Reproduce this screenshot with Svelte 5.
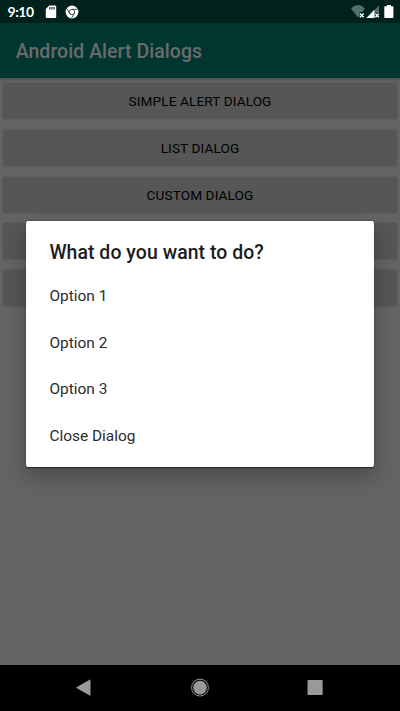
<script>
  const buttons = ['Simple Alert Dialog', 'List Dialog', 'Custom Dialog', '', ''];
  const options = ['Option 1', 'Option 2', 'Option 3', 'Close Dialog'];
</script>

<div class="screen">
  <header class="status">
    <span class="time">9:10</span>
    <svg class="sd" width="12" height="14" viewBox="0 0 12 14">
      <path d="M4.2.5H10Q11.2.5 11.2 1.7V12Q11.2 13 10 13H2Q.8 13 .8 12V4Z" fill="#fff" />
      <path d="M4.8 2v2.4M6.9 2v2.4M9 2v2.4" stroke="#00211c" stroke-width="1.1" />
    </svg>
    <svg class="chrome" width="14" height="14" viewBox="0 0 14 14">
      <circle cx="7" cy="7" r="6.4" fill="#fff" />
      <g fill="none" stroke="#18332f" stroke-width=".8">
        <circle cx="7" cy="7" r="2.7" />
        <path d="M7 4.3H12.4M4.7 8.4 2 3.7M9.3 8.4 6.6 13" />
      </g>
    </svg>
    <svg class="signals" width="48" height="16" viewBox="0 0 48 16">
      <path d="M0 3.4Q7-3.2 14 3.4L11.5 7H8.6V11L7 12.4Z" fill="#50706b" />
      <path d="M9 8.6 12.6 12.2M12.6 8.6 9 12.2" stroke="#fff" stroke-width="1.4" />
      <path d="M28 .6V8H24V13H15.8Z" fill="#50706b" />
      <path d="M23.4 4.8V13H15.4Z" fill="#fff" />
      <path d="M24.4 8.8 27.8 12.2M27.8 8.8 24.4 12.2" stroke="#fff" stroke-width="1.4" />
      <path d="M33.9 1.3H36V0H40V1.3H41.5Q42.4 1.3 42.4 2.1V12.2Q42.4 13 41.5 13H34.1Q33.3 13 33.3 12.2V2.1Q33.3 1.3 33.9 1.3Z" fill="#fff" />
    </svg>
  </header>
  <div class="appbar">Android Alert Dialogs</div>
  <main>
    {#each buttons as label}
      <button>{label}</button>
    {/each}
  </main>
  <nav>
    <svg width="400" height="46" viewBox="0 0 400 46">
      <g fill="#999">
        <path d="M76.5 22.2Q75.8 22.6 76.5 23L89.6 30.6Q90.5 31 90.5 30V15.2Q90.5 14.2 89.6 14.7Z" />
        <circle cx="200" cy="22.6" r="6.8" />
        <circle cx="200" cy="22.6" r="8.4" fill="none" stroke="#999" stroke-width="1" />
        <rect x="307.5" y="15.1" width="15.2" height="15" rx="1.2" />
      </g>
    </svg>
  </nav>
  <section class="dialog" role="dialog" aria-labelledby="dialog-title">
    <h2 id="dialog-title">What do you want to do?</h2>
    <ul>
      {#each options as option}
        <li>{option}</li>
      {/each}
    </ul>
  </section>
</div>

<style>
  .screen {
    position: relative;
    display: flex;
    flex-direction: column;
    width: 400px;
    height: 711px;
    overflow: hidden;
    background: #646464;
    font-family: Roboto, sans-serif;
  }
  .status {
    display: flex;
    flex: none;
    box-sizing: border-box;
    height: 23px;
    padding: 5px 0 0 7.5px;
    background: #00211c;
  }
  .time {
    width: 37.5px;
    color: #fff;
    font: 700 14px/14px Lato, sans-serif;
    letter-spacing: -0.45px;
  }
  .chrome { margin-left: 8px; }
  .signals { margin-left: auto; margin-right: 1px; }
  .appbar {
    flex: none;
    box-sizing: border-box;
    height: 54.5px;
    padding-left: 15.7px;
    background: #003630;
    color: #6b6b6b;
    font-size: 19.45px;
    font-weight: 500;
    letter-spacing: 0.07px;
    line-height: 57px;
    box-shadow: 0 1px 3px rgba(0, 0, 0, 0.3);
  }
  main {
    display: flex;
    flex: 1;
    flex-direction: column;
    gap: 10.8px;
    padding: 5.6px 3.3px 0;
  }
  button {
    flex: none;
    height: 36px;
    padding: 0;
    border: 0;
    border-radius: 2px;
    background: #565656;
    box-shadow: 0 0 1.5px rgba(0, 0, 0, 0.3);
    color: #000;
    font: 400 13.6px/36px Roboto, sans-serif;
    letter-spacing: 0.12px;
    text-transform: uppercase;
  }
  nav {
    flex: none;
    height: 46px;
    background: #000;
  }
  nav svg { display: block; }
  .dialog {
    position: absolute;
    top: 220.5px;
    left: 25.7px;
    box-sizing: border-box;
    width: 348.5px;
    height: 246px;
    padding: 17px 23.7px 0;
    border-radius: 2px;
    background: #fff;
    box-shadow: 0 0 1px rgba(0, 0, 0, 0.8), 0 1px 1px rgba(0, 0, 0, 0.45), 0 9px 22px rgba(0, 0, 0, 0.28);
  }
  h2 {
    margin: 0;
    color: #1c1c1c;
    font-size: 19.45px;
    font-weight: 500;
    letter-spacing: 0.06px;
    line-height: 30px;
  }
  ul {
    margin: 5.4px 0 0;
    padding: 0;
    list-style: none;
  }
  li {
    height: 46.7px;
    color: #2c2c2c;
    font-size: 15.45px;
    line-height: 47px;
  }
</style>
